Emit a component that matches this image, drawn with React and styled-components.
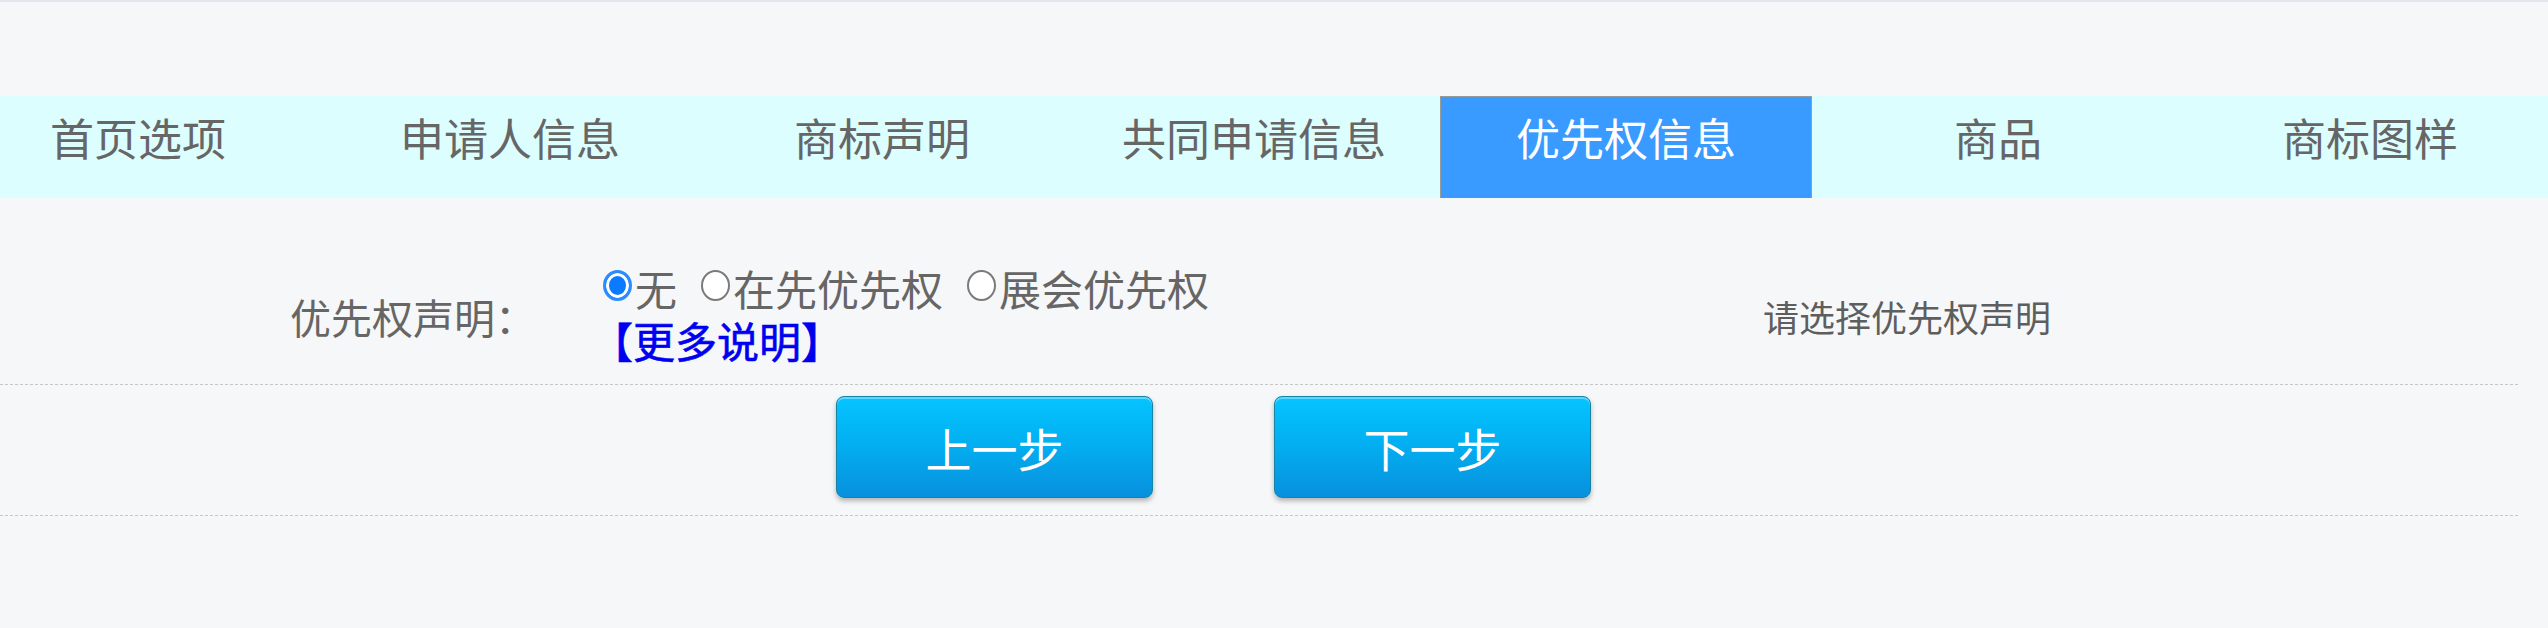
import React from "react";
import styled, { createGlobalStyle } from "styled-components";

const GlobalStyle = createGlobalStyle`
  html, body {
    margin: 0;
    padding: 0;
    background: #f6f7f9;
  }
  body {
    font-family: "Noto Sans CJK SC", "Noto Sans", sans-serif;
  }
`;

const Page = styled.div`
  min-height: 626px;
  background: #f6f7f9;
  border-top: 2px solid #e4e6ee;
  overflow: hidden;
`;

const TabBar = styled.nav`
  margin-top: 94px;
  height: 102px;
  background: #dcfefe;
  overflow: hidden;
`;

const TabList = styled.ul`
  display: flex;
  list-style: none;
  margin: 0 0 0 -48px;
  padding: 0;
  height: 100%;
`;

const Tab = styled.li`
  flex: 0 0 372px;
  box-sizing: border-box;
  height: 103px;
  display: flex;
  align-items: center;
  justify-content: center;
  padding-bottom: 22px;
  font-size: 44px;
  color: ${(p) => (p.$active ? "#ffffff" : "#666666")};
  background: ${(p) => (p.$active ? "#399aff" : "transparent")};
  border: 1px solid ${(p) => (p.$active ? "#9a9a9a" : "transparent")};
  border-bottom-color: ${(p) => (p.$active ? "#c9d6e2" : "transparent")};
`;

const Form = styled.div`
  width: calc(100% - 30px);
`;

const FieldRow = styled.div`
  display: grid;
  grid-template-columns: 603px 1160px 1fr;
  align-items: center;
  padding: 64px 0 18px;
  border-bottom: 1px dashed #c6c6c6;
`;

const Label = styled.div`
  padding-left: 290px;
  padding-top: 4px;
  font-size: 41px;
  color: #666666;
  white-space: nowrap;
`;

const Value = styled.div`
  display: flex;
  flex-direction: column;
`;

const RadioLine = styled.div`
  display: flex;
  align-items: center;
  height: 52px;
  line-height: 52px;
  font-size: 42px;
  color: #666666;
  overflow: visible;
`;

const RadioOption = styled.label`
  display: inline-flex;
  align-items: center;
  height: 52px;
  margin-right: 24px;
  white-space: nowrap;
`;

const RadioMark = styled.span`
  box-sizing: border-box;
  width: 29px;
  height: 31px;
  border-radius: 50%;
  margin-right: 3px;
  margin-top: -5px;
  border: ${(p) => (p.$checked ? "3px solid #2a8cff" : "2px solid #7a7a7a")};
  background: ${(p) => (p.$checked ? "#0a7aff" : "#ffffff")};
  box-shadow: ${(p) => (p.$checked ? "inset 0 0 0 3px #ffffff" : "none")};
`;

const MoreLink = styled.a`
  display: block;
  height: 52px;
  line-height: 52px;
  font-size: 42px;
  font-weight: 400;
  -webkit-text-stroke: 0.6px #0000f0;
  color: #0000f0;
  text-decoration: none;
  white-space: nowrap;
  margin-left: -12px;
`;

const Hint = styled.div`
  font-size: 36px;
  color: #5e5e5e;
  padding-top: 4px;
  white-space: nowrap;
`;

const ButtonRow = styled.div`
  display: flex;
  gap: 121px;
  padding: 11px 0 17px 836px;
  border-bottom: 1px dashed #c6c6c6;
`;

const StepButton = styled.button`
  box-sizing: border-box;
  width: 317px;
  height: 102px;
  border-radius: 8px;
  border: 1px solid #1784a6;
  background: linear-gradient(#05c4ff 0%, #02b0f2 45%, #0890dd 100%);
  box-shadow: inset 0 2px 0 rgba(255, 255, 255, 0.35), 0 3px 5px rgba(0, 0, 0, 0.28);
  color: #ffffff;
  font-family: "Noto Sans CJK SC", sans-serif;
  font-size: 46px;
  padding: 0;
  cursor: pointer;
`;

const tabs = ["首页选项", "申请人信息", "商标声明", "共同申请信息", "优先权信息", "商品", "商标图样"];

const options = [
  { text: "无", checked: true },
  { text: "在先优先权", checked: false },
  { text: "展会优先权", checked: false },
];

export default function App() {
  return (
    <>
      <GlobalStyle />
      <Page>
        <TabBar>
          <TabList>
            {tabs.map((t) => (
              <Tab key={t} $active={t === "优先权信息"}>
                {t}
              </Tab>
            ))}
          </TabList>
        </TabBar>
        <Form>
          <FieldRow>
            <Label>优先权声明：</Label>
            <Value>
              <RadioLine>
                {options.map((o) => (
                  <RadioOption key={o.text}>
                    <RadioMark $checked={o.checked} />
                    {o.text}
                  </RadioOption>
                ))}
              </RadioLine>
              <MoreLink href="#">【更多说明】</MoreLink>
            </Value>
            <Hint>请选择优先权声明</Hint>
          </FieldRow>
          <ButtonRow>
            <StepButton>上一步</StepButton>
            <StepButton>下一步</StepButton>
          </ButtonRow>
        </Form>
      </Page>
    </>
  );
}
